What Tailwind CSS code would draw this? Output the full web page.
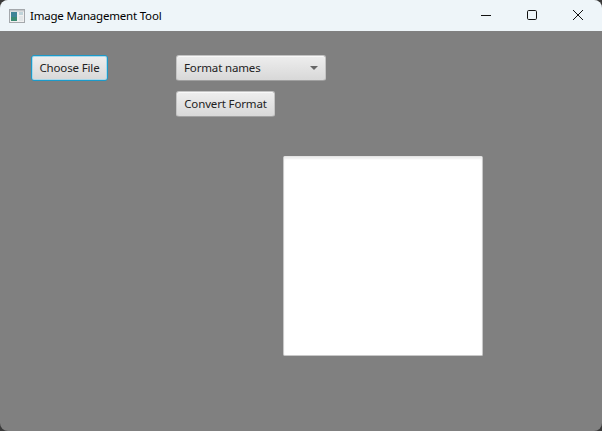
<!DOCTYPE html>
<html>
<head>
<meta charset="utf-8">
<script src="https://cdn.jsdelivr.net/npm/@tailwindcss/browser@4"></script>
</head>
<body class="bg-[#3a3a3a] overflow-hidden font-['Noto_Sans',sans-serif]">
<div class="w-[602px] h-[431px] rounded-[8px] overflow-hidden flex flex-col bg-[#808080]">
  <div class="h-[31px] bg-[#eef5f9] flex items-center shrink-0">
    <svg class="ml-[9px] w-[16px] h-[14px] shrink-0" viewBox="0 0 16 14">
      <rect x="0.5" y="0.5" width="15" height="13" fill="#f0f0f0" stroke="#a4a8ac"/>
      <rect x="1" y="1" width="14" height="1.5" fill="#c4c8cb"/>
      <rect x="2" y="3" width="6" height="5" fill="#3f8496"/>
      <rect x="2" y="8" width="6" height="4" fill="#3a8a72"/>
      <rect x="10" y="3" width="4" height="3" fill="#c0d4da"/>
      <rect x="10" y="7" width="4" height="5" fill="#e2e6e8"/>
    </svg>
    <span class="ml-[5px] text-[11.5px] text-black leading-none tracking-[-0.2px]">Image Management Tool</span>
    <div class="ml-auto flex items-center h-full pr-[1px]">
      <div class="w-[46px] h-full flex items-center justify-center">
        <svg width="12" height="12" viewBox="0 0 12 12"><path d="M1 5.5H11" stroke="#111" stroke-width="1"/></svg>
      </div>
      <div class="w-[46px] h-full flex items-center justify-center">
        <svg width="12" height="12" viewBox="0 0 12 12"><rect x="1.5" y="0.5" width="9" height="9" rx="1.2" fill="none" stroke="#111" stroke-width="1"/></svg>
      </div>
      <div class="w-[46px] h-full flex items-center justify-center">
        <svg width="12" height="12" viewBox="0 0 12 12"><path d="M1 0L11 10M11 0L1 10" stroke="#111" stroke-width="1"/></svg>
      </div>
    </div>
  </div>
  <div class="flex-1 flex items-start pl-[31px] pt-[24px]">
    <button class="w-[77px] h-[26px] rounded-[3px] border border-[#1c9ac9] shadow-[inset_0_0_0_1px_#a8d8ea] bg-gradient-to-b from-[#eeeeee] to-[#d8d8d8] text-[11.5px] tracking-[-0.15px] text-[#222] flex items-center justify-center leading-none whitespace-nowrap">Choose File</button>
    <div class="ml-[68px] flex flex-col gap-[10px]">
      <div class="w-[150px] h-[26px] rounded-[3px] border border-[#c4c4c4] border-b-[#a0a0a0] shadow-[inset_0_1px_0_#f8f8f8] bg-gradient-to-b from-[#eeeeee] to-[#d8d8d8] text-[11.5px] tracking-[-0.15px] text-[#222] flex items-center pl-[7px] pr-[7px] leading-none">
        <span>Format names</span>
        <svg class="ml-auto" width="8" height="4" viewBox="0 0 8 4"><path d="M0 0H8L4 4Z" fill="#666"/></svg>
      </div>
      <button class="w-[99px] h-[26px] rounded-[3px] border border-[#c4c4c4] border-b-[#a0a0a0] shadow-[inset_0_1px_0_#f8f8f8] bg-gradient-to-b from-[#eeeeee] to-[#d8d8d8] text-[11.5px] tracking-[-0.15px] text-[#222] flex items-center justify-center leading-none whitespace-nowrap">Convert Format</button>
      <div class="ml-[107px] mt-[29px] w-[200px] h-[200px] bg-white rounded-[2px] border border-[#c8c8c8] border-t-[#e4e4e4] shadow-[inset_0_2px_2px_#eeeeee]"></div>
    </div>
  </div>
</div>
</body>
</html>
